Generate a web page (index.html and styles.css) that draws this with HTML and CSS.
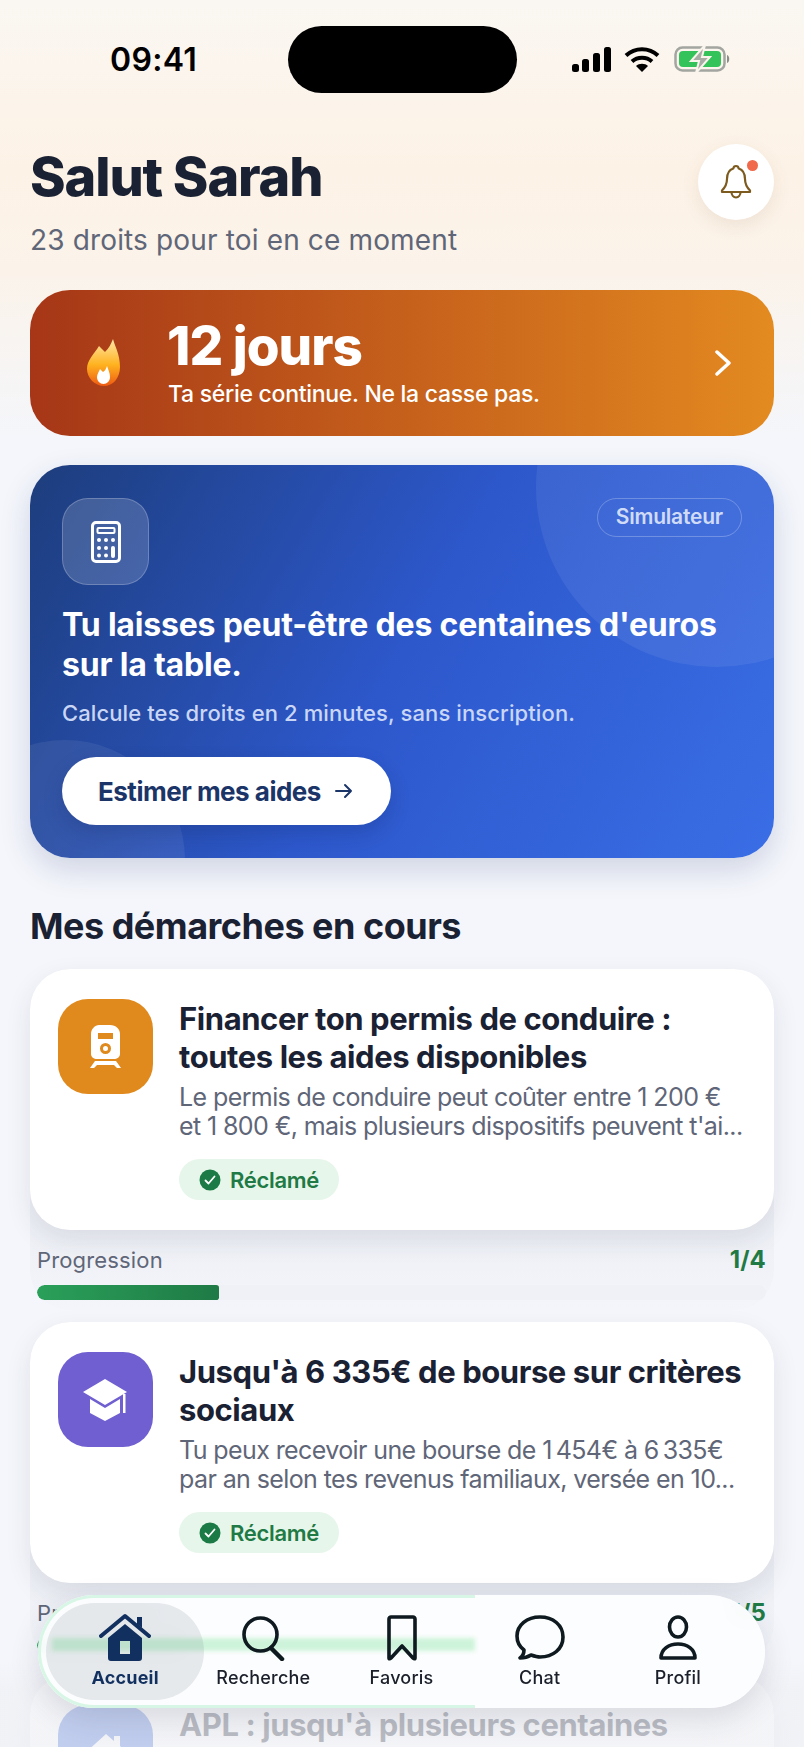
FILE: index.html

```html
<!DOCTYPE html>
<html lang="fr">
<head>
<meta charset="UTF-8" />
<title>Accueil</title>
<link rel="stylesheet" href="styles.css">
</head>
<body>
<div class="screen">

  <div class="statusbar">
    <span class="time">09:41</span>
    <div class="island"></div>
    <div class="status-icons">
      <svg width="41" height="25" viewBox="0 0 41 25"><rect x="1" y="17" width="7" height="8" rx="2.5"/><rect x="11" y="12" width="7" height="13" rx="2.5"/><rect x="22" y="6" width="7" height="19" rx="2.5"/><rect x="33" y="0" width="7" height="25" rx="2.5"/></svg>
      <svg width="36" height="26" viewBox="0 0 36 26" fill="none" stroke="#000" stroke-width="4"><path d="M2 9.5C11 1 25 1 34 9.5"/><path d="M8 15.5C13.500 10.500 22.500 10.500 28 15.500"/><path d="M18 26L12 20C15 17 21 17 24 20Z" fill="#000" stroke="none"/></svg>
      <svg class="battery" width="58" height="28" viewBox="0 0 58 28"><rect x="1.500" y="2.500" width="49" height="23" rx="7" fill="none" stroke="#a3a5a0" stroke-width="2.500"/><rect x="5" y="6" width="42" height="16" rx="4" fill="#34c35a"/><path d="M53 10c3 1 3 7 0 8z" fill="#8b8d88"/><path d="M31 0L17 16h8l-3 12 14-16h-8z" fill="#a9aba6" stroke="#f9f4ec" stroke-width="2"/></svg>
    </div>
  </div>

  <header class="top">
    <div>
      <h1>Salut Sarah</h1>
      <p class="top-sub">23 droits pour toi en ce moment</p>
    </div>
    <button class="bell">
      <svg width="32" height="36" viewBox="0 0 32 36" fill="none" stroke="#7d5a1e" stroke-width="2.200" stroke-linejoin="round"><path d="M16 2c-1.500 0-2.500 1-2.700 2.500C8.500 6 7 10 7 15c0 5-2.500 9-5 11.500V28h28v-1.500C27.500 24 25 20 25 15c0-5-1.500-9-6.300-10.500C18.500 3 17.500 2 16 2z"/><path d="M11.500 28c0 3 2 5.500 4.500 5.500s4.500-2.500 4.500-5.500"/></svg>
      <span class="bell-dot"></span>
    </button>
  </header>

  <a class="streak">
    <svg class="flame" width="34" height="48" viewBox="0 0 34 48"><defs><linearGradient id="fl" x1="0" y1="0" x2="0" y2="1"><stop offset="0" stop-color="#ffe7a8"/><stop offset=".55" stop-color="#ffb21f"/><stop offset="1" stop-color="#ee5a12"/></linearGradient></defs><path d="M26 0c1 5 7 15 7 28 0 11-7 19-16 19S0 39 0 30C0 21 7 15 12 7l6 6c4-4 6-8 8-13z" fill="url(#fl)"/><path d="M20 27c1 3 3 7 3 11 0 4-3 7-6.500 7S10 42 10 38c0-3 2-5 3-8l3 3c2-1 3-3 4-6z" fill="#fff"/></svg>
    <div class="streak-text">
      <strong>12 jours</strong>
      <span>Ta série continue. Ne la casse pas.</span>
    </div>
    <svg class="chev" width="16" height="26" viewBox="0 0 16 26" fill="none" stroke="#fff" stroke-width="3.500" stroke-linecap="round" stroke-linejoin="round"><path d="M2 2l12 11L2 24"/></svg>
  </a>

  <section class="promo">
    <span class="circle circle-a"></span>
    <span class="circle circle-b"></span>
    <div class="promo-top">
      <div class="promo-icon">
        <svg width="30" height="42" viewBox="0 0 30 42"><rect x="1.500" y="1.500" width="27" height="39" rx="3.500" fill="none" stroke="#fff" stroke-width="3"/><rect x="6.500" y="7" width="17" height="5" rx="1" fill="none" stroke="#fff" stroke-width="2"/><g fill="#fff"><circle cx="8" cy="19" r="2"/><circle cx="15" cy="19" r="2"/><circle cx="22" cy="19" r="2"/><circle cx="8" cy="27" r="2"/><circle cx="15" cy="27" r="2"/><circle cx="8" cy="34.500" r="2"/><circle cx="15" cy="34.500" r="2"/><rect x="20" y="25" width="4" height="12" rx="2"/></g></svg>
      </div>
      <span class="promo-tag">Simulateur</span>
    </div>
    <h2>Tu laisses peut-être des centaines d'euros sur la table.</h2>
    <p>Calcule tes droits en 2 minutes, sans inscription.</p>
    <button class="promo-btn">Estimer mes aides
      <svg width="18" height="16" viewBox="0 0 18 16" fill="none" stroke="#1b3568" stroke-width="2" stroke-linecap="round" stroke-linejoin="round"><path d="M1 8h15M10 2l6 6-6 6"/></svg>
    </button>
  </section>

  <h3 class="section-title">Mes démarches en cours</h3>

  <div class="item">
    <div class="card">
      <div class="card-icon orange">
        <svg width="34" height="44" viewBox="0 0 34 44"><path fill-rule="evenodd" d="M10 0h11c6 0 10 4 10 9v20c0 3-3 5-6 5H8c-3 0-6-2-6-5V9c0-5 4-9 8-9zM9 8v6h15V8zM16.500 18a5.500 5.500 0 100 11 5.500 5.500 0 000-11zm0 3a2.500 2.500 0 110 5 2.500 2.500 0 010-5z" fill="#fff"/><path d="M6 36l-5 7h4l3-3h17l3 3h4l-5-7z" fill="#fff"/></svg>
      </div>
      <div class="card-body">
        <h4>Financer ton permis de conduire : toutes les aides disponibles</h4>
        <p class="desc">Le permis de conduire peut coûter entre 1 200 €<br>et 1 800 €, mais plusieurs dispositifs peuvent t'ai...</p>
        <span class="badge"><svg width="22" height="22" viewBox="0 0 22 22"><circle cx="11" cy="11" r="10.500" fill="#1b7a45"/><path d="M6.500 11.500l3 3 6-7" fill="none" stroke="#fff" stroke-width="1.800" stroke-linecap="round" stroke-linejoin="round"/></svg>Réclamé</span>
      </div>
    </div>
    <div class="progress">
      <div class="progress-row"><span>Progression</span><b>1/4</b></div>
      <div class="track"><div class="fill" style="width:25%"></div></div>
    </div>
  </div>

  <div class="item">
    <div class="card">
      <div class="card-icon purple">
        <svg width="46" height="42" viewBox="0 0 46 42"><path d="M22 0L44 13 22 26 0 13z" fill="#fff"/><path d="M7 20l15 9 15-9v14L22 42 7 34z" fill="#fff"/><rect x="40" y="15" width="2.500" height="19" fill="#fff"/></svg>
      </div>
      <div class="card-body">
        <h4>Jusqu'à 6 335€ de bourse sur critères sociaux</h4>
        <p class="desc">Tu peux recevoir une bourse de 1&#8239;454€ à 6&#8239;335€ par an selon tes revenus familiaux, versée en 10...</p>
        <span class="badge"><svg width="22" height="22" viewBox="0 0 22 22"><circle cx="11" cy="11" r="10.500" fill="#1b7a45"/><path d="M6.500 11.500l3 3 6-7" fill="none" stroke="#fff" stroke-width="1.800" stroke-linecap="round" stroke-linejoin="round"/></svg>Réclamé</span>
      </div>
    </div>
    <div class="progress">
      <div class="progress-row"><span>Progression</span><b>1/5</b></div>
      <div class="track"><div class="fill" style="width:20%"></div></div>
    </div>
  </div>

  <div class="item">
    <div class="card">
      <div class="card-icon blue">
        <svg width="46" height="42" viewBox="0 0 46 42"><path d="M23 2L2 21h6v20h30V21h6l-7-7V4h-6v5z" fill="#fff"/></svg>
      </div>
      <div class="card-body">
        <h4>APL : jusqu'à plusieurs centaines</h4>
      </div>
    </div>
  </div>

  <div class="fade"></div>

  <nav class="tabbar">
    <span class="glow-line"></span>
    <span class="glow-band"></span>
    <a class="tab active">
      <svg width="52" height="48" viewBox="0 0 52 48"><path d="M2 23L26 3l24 20" fill="none" stroke="#12305f" stroke-width="4" stroke-linecap="round" stroke-linejoin="round"/><path d="M38 11V4h5v11z" fill="#12305f"/><path fill-rule="evenodd" d="M26 11l17 14v20c0 2-1 3-3 3H12c-2 0-3-1-3-3V25zM21 28v13h10V28z" fill="#12305f"/></svg>
      <span>Accueil</span>
    </a>
    <a class="tab">
      <svg width="44" height="46" viewBox="0 0 44 46" fill="none" stroke="#0e1a1f" stroke-width="3.600" stroke-linecap="round"><circle cx="19.500" cy="19.500" r="16.500"/><path d="M30 33l11 11" stroke-width="4.500"/></svg>
      <span>Recherche</span>
    </a>
    <a class="tab">
      <svg width="30" height="46" viewBox="0 0 30 46" fill="none" stroke="#0e1a1f" stroke-width="3.600" stroke-linecap="round" stroke-linejoin="round"><path d="M4 2h22c1 0 2 1 2 2v39c0 1-1 1-2 0L15 31 4 43c-1 1-2 1-2 0V4c0-1 1-2 2-2z"/></svg>
      <span>Favoris</span>
    </a>
    <a class="tab">
      <svg width="50" height="46" viewBox="0 0 50 46" fill="none" stroke="#0e1a1f" stroke-width="3.600" stroke-linejoin="round"><path d="M25 2C12 2 2 10 2 21c0 6 3 11 7 14 0 3-1 6-4 8 4 0 8-1 11-3 3 1 6 2 9 2 13 0 23-8 23-20S38 2 25 2z"/></svg>
      <span>Chat</span>
    </a>
    <a class="tab">
      <svg width="38" height="46" viewBox="0 0 38 46" fill="none" stroke="#0e1a1f" stroke-width="3.600" stroke-linejoin="round"><ellipse cx="19" cy="12" rx="8.500" ry="10"/><path d="M2 43c0-9 8-14 17-14s17 5 17 14z"/></svg>
      <span>Profil</span>
    </a>
  </nav>

</div>
</body>
</html>
```

FILE: styles.css

```css
* { box-sizing: border-box; }
body { margin: 0; font-family: Inter, "Liberation Sans", sans-serif; color: #1a2133; }
h1, h2, h3, h4, p { margin: 0; }
button { font-family: inherit; border: none; cursor: pointer; }

.screen {
  position: relative;
  width: 804px;
  height: 1747px;
  overflow: hidden;
  padding: 0 30px;
  background: linear-gradient(180deg, #faf7f2 0, #fdf2e6 170px, #fbf3ea 270px, #f4f6fb 440px, #f5f6fb 100%);
}

.statusbar { display: flex; align-items: center; height: 118px; margin: 0 -30px; }
.time { width: 288px; padding-left: 110px; font-size: 32px; font-weight: 600; color: #000; letter-spacing: 0.3px; }
.island { width: 229px; height: 67px; background: #000; border-radius: 34px; }
.status-icons { display: flex; align-items: center; gap: 12px; padding-left: 54px; }
.battery { margin-left: 2px; }

.top { display: flex; justify-content: space-between; align-items: flex-start; height: 172px; padding-top: 23px; }
h1 { font-size: 54px; line-height: 72px; font-weight: 800; letter-spacing: -1.1px; }
.top-sub { margin-top: 9px; font-size: 28px; line-height: 36px; color: #5f6678; letter-spacing: 0.15px; }
.bell {
  position: relative;
  width: 76px;
  height: 76px;
  margin-top: 3px;
  background: #fff;
  border-radius: 50%;
  box-shadow: 0 6px 18px rgba(120, 90, 50, 0.1);
  display: flex;
  align-items: center;
  justify-content: center;
}
.bell-dot { position: absolute; top: 16px; right: 16px; width: 11px; height: 11px; border-radius: 50%; background: #f0694a; }

.streak {
  display: flex;
  align-items: center;
  height: 146px;
  padding: 0 43px 0 57px;
  border-radius: 40px;
  background: linear-gradient(90deg, #a63617 0, #c8641c 55%, #e38a20 100%);
  color: #fff;
}
.streak-text { flex: 1; display: flex; flex-direction: column; margin-left: 46px; }
.streak-text strong { font-size: 53px; line-height: 58px; font-weight: 800; letter-spacing: -1px; }
.streak-text span { margin: 4px 0 0 1px; font-size: 23px; line-height: 30px; font-weight: 500; letter-spacing: -0.28px; }

.promo {
  position: relative;
  overflow: hidden;
  height: 393px;
  margin-top: 29px;
  padding: 33px 32px 0;
  border-radius: 40px;
  background: linear-gradient(120deg, #1d3d7c 0, #2d58cc 50%, #3a6ee6 100%);
  box-shadow: 0 12px 30px rgba(40, 60, 120, 0.18);
  color: #fff;
}
.circle { position: absolute; border-radius: 50%; background: rgba(255, 255, 255, 0.07); }
.circle-a { width: 360px; height: 360px; left: 506px; top: -158px; }
.circle-b { width: 240px; height: 240px; left: -85px; top: 275px; }
.promo-top { position: relative; display: flex; justify-content: space-between; align-items: flex-start; }
.promo-icon {
  display: flex;
  align-items: center;
  justify-content: center;
  width: 87px;
  height: 87px;
  border-radius: 26px;
  background: rgba(255, 255, 255, 0.16);
  border: 1.5px solid rgba(255, 255, 255, 0.22);
}
.promo-tag {
  height: 39px;
  padding: 0 18px;
  border-radius: 20px;
  border: 1.5px solid rgba(255, 255, 255, 0.25);
  font-size: 21px;
  line-height: 36px;
  font-weight: 600;
  color: #d0dcf7;
  letter-spacing: -0.2px;
}
.promo h2 { position: relative; margin-top: 20px; font-size: 32px; line-height: 40px; font-weight: 700; letter-spacing: -0.2px; }
.promo p { position: relative; margin-top: 13px; font-size: 22px; line-height: 30px; color: #c9d6f5; font-weight: 500; letter-spacing: 0.1px; }
.promo-btn {
  position: relative;
  display: flex;
  align-items: center;
  gap: 14px;
  width: 329px;
  height: 68px;
  margin-top: 29px;
  padding-left: 36px;
  border-radius: 34px;
  background: #fff;
  color: #1b3568;
  font-size: 26px;
  font-weight: 700;
  letter-spacing: -0.5px;
  box-shadow: 0 8px 20px rgba(15, 30, 80, 0.2);
}

.section-title { margin-top: 44px; font-size: 36px; line-height: 48px; font-weight: 700; letter-spacing: -0.5px; }

.item { margin-top: 19px; height: 341px; border-radius: 40px; background: linear-gradient(180deg, #e9ebf1 0, #eceef4 70%, #f3f5fa 100%); }
.item + .item { margin-top: 12px; }
.card {
  display: flex;
  gap: 26px;
  height: 261px;
  padding: 30px 22px 30px 28px;
  border-radius: 40px;
  background: #fff;
  box-shadow: 0 10px 26px rgba(40, 50, 80, 0.1);
}
.card-icon { flex: none; display: flex; align-items: center; justify-content: center; width: 95px; height: 95px; border-radius: 30px; }
.orange { background: #e08a1e; }
.purple { background: #6f5fd0; }
.blue { background: #3a66d8; }
.card-body { min-width: 0; }
h4 { font-size: 31px; line-height: 38px; font-weight: 700; letter-spacing: -0.42px; margin-top: 1px; padding-right: 6px; }
.desc { margin-top: 7px; font-size: 25px; line-height: 29px; color: #5f6678; letter-spacing: -0.6px; }
.badge {
  display: inline-flex;
  align-items: center;
  gap: 9px;
  height: 41px;
  margin-top: 18px;
  padding: 0 20px;
  border-radius: 21px;
  background: #e6f6ea;
  color: #1f7a45;
  font-size: 22px;
  font-weight: 600;
  letter-spacing: -0.3px;
}
.progress { padding: 15px 8px 0 7px; }
.progress-row { display: flex; justify-content: space-between; font-size: 22px; line-height: 30px; color: #5f6678; letter-spacing: 0.15px; }
.progress-row b { color: #1f7a45; font-size: 24px; font-weight: 700; }
.track { height: 15px; margin-top: 10px; border-radius: 8px; background: #eff1f6; overflow: hidden; }
.fill { height: 100%; border-radius: 8px 3px 3px 8px; background: linear-gradient(90deg, #2aa05a, #1f7a45); }

.fade { position: absolute; left: 0; right: 0; top: 1660px; bottom: 0; background: linear-gradient(180deg, rgba(240, 241, 245, 0) 0, rgba(240, 241, 245, 0.74) 30px); }

.tabbar {
  position: absolute;
  left: 38px;
  top: 1595px;
  width: 727px;
  height: 113px;
  display: flex;
  padding: 0 18px;
  border-radius: 57px;
  background: rgba(252, 253, 254, 0.96);
  backdrop-filter: blur(10px);
  box-shadow: 0 10px 30px rgba(40, 50, 80, 0.14);
}
.glow-line { position: absolute; left: 0; top: 0; bottom: 0; width: 437px; border: 3px solid #d8f6e5; border-right: none; border-radius: 57px 0 0 57px; filter: blur(0.6px); }
.glow-band { position: absolute; left: 14px; top: 43px; width: 423px; height: 13px; background: #cdf4da; filter: blur(2px); }
.tab { position: relative; flex: 1; display: flex; flex-direction: column; align-items: center; justify-content: flex-end; padding-bottom: 19px; gap: 6px; font-size: 18px; line-height: 22px; font-weight: 500; color: #1a1f2a; letter-spacing: 0.2px; }
.tab svg { position: relative; }
.tab span { position: relative; }
.tab.active::before { content: ""; position: absolute; left: -10px; right: -10px; top: 8px; bottom: 8px; border-radius: 50px; background: rgba(120, 130, 145, 0.17); }
.tab.active { color: #12305f; font-weight: 700; }
```
